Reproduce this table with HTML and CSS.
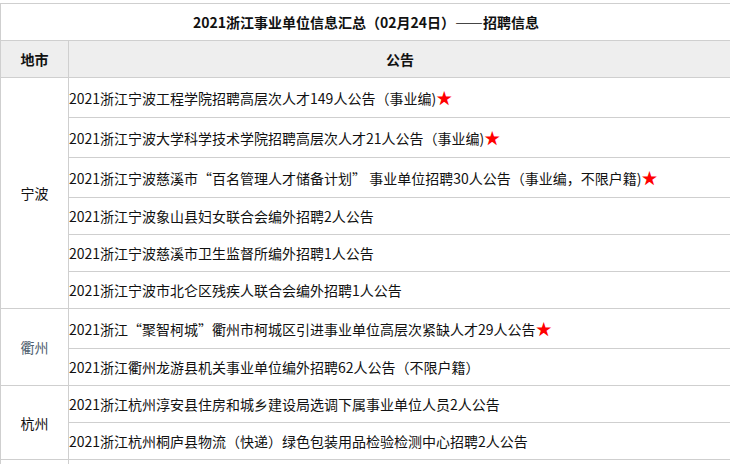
FILE: index.html
```html
<!DOCTYPE html>
<html lang="zh-CN">
<head>
<meta charset="utf-8">
<title>2021浙江事业单位信息汇总</title>
<link rel="stylesheet" href="styles.css">
</head>
<body>
<table class="info">
  <colgroup><col class="c-city"><col class="c-notice"></colgroup>
  <tr class="row"><td colspan="2" class="title">2021浙江事业单位信息汇总（02月24日）——招聘信息</td></tr>
  <tr class="row head"><th>地市</th><th>公告</th></tr>
  <tr class="row tall"><td rowspan="6" class="city">宁波</td><td class="notice">2021浙江宁波工程学院招聘高层次人才149人公告（事业编)<span class="star">★</span></td></tr>
  <tr class="row tall"><td class="notice">2021浙江宁波大学科学技术学院招聘高层次人才21人公告（事业编)<span class="star">★</span></td></tr>
  <tr class="row tall"><td class="notice">2021浙江宁波慈溪市“百名管理人才储备计划” 事业单位招聘30人公告（事业编，不限户籍)<span class="star">★</span></td></tr>
  <tr class="row"><td class="notice">2021浙江宁波象山县妇女联合会编外招聘2人公告</td></tr>
  <tr class="row"><td class="notice">2021浙江宁波慈溪市卫生监督所编外招聘1人公告</td></tr>
  <tr class="row"><td class="notice">2021浙江宁波市北仑区残疾人联合会编外招聘1人公告</td></tr>
  <tr class="row tall"><td rowspan="2" class="city city-alt">衢州</td><td class="notice">2021浙江“聚智柯城”衢州市柯城区引进事业单位高层次紧缺人才29人公告<span class="star">★</span></td></tr>
  <tr class="row"><td class="notice">2021浙江衢州龙游县机关事业单位编外招聘62人公告（不限户籍）</td></tr>
  <tr class="row"><td rowspan="2" class="city">杭州</td><td class="notice">2021浙江杭州淳安县住房和城乡建设局选调下属事业单位人员2人公告</td></tr>
  <tr class="row"><td class="notice">2021浙江杭州桐庐县物流（快递）绿色包装用品检验检测中心招聘2人公告</td></tr>
  <tr class="row"><td class="city"></td><td class="notice"></td></tr>
</table>
</body>
</html>
```

FILE: styles.css
```css
html, body {
  margin: 0;
  padding: 0;
  background: #fff;
}
body {
  padding-top: 3px;
  font-family: "Microsoft YaHei", "Noto Sans CJK SC", "Noto Sans", sans-serif;
  font-size: 14px;
  color: #111;
}
.info {
  border-collapse: collapse;
  table-layout: fixed;
  width: 731px;
}
.c-city { width: 68px; }
.c-notice { width: 663px; }
.info td, .info th {
  border: 1px solid #cfcfcf;
  padding: 0;
  line-height: 20px;
  vertical-align: middle;
  white-space: nowrap;
}
.row { height: 37px; }
.row.tall { height: 40px; }
.title {
  text-align: center;
  font-weight: bold;
}
.head th {
  background: #eeeeee;
  font-weight: bold;
  text-align: center;
}
.city {
  text-align: center;
}
.city-alt {
  color: #4f6070;
}
.notice {
  text-align: left;
  padding-left: 0;
}
.star {
  color: #ff0000;
  font-size: 16px;
  line-height: 20px;
}
```
